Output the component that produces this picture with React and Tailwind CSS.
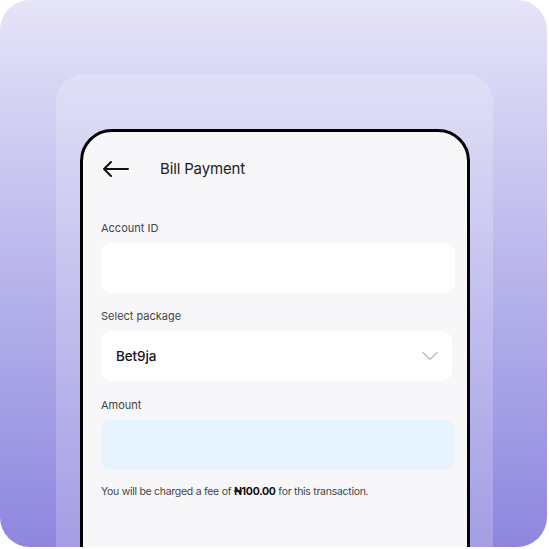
import React from "react";

export default function App() {
  const font = { fontFamily: "Inter, 'Liberation Sans', sans-serif" };
  return (
    <div className="w-[549px] h-[549px] bg-white" style={font}>
      <div className="w-[547px] h-[547px] rounded-[30px] overflow-hidden bg-gradient-to-b from-[#e6e4f7] to-[#8e86de] flex flex-col pt-[74px] pl-[56px]">
        <div className="w-[437px] flex-1 rounded-t-[28px] bg-white/20 pt-[55px] pl-[24px] overflow-hidden">
          <div className="w-[390px] h-[430px] border-[3px] border-black rounded-t-[32px] bg-[#f7f7f9] pl-[18px]">
            <div className="flex items-center h-[24px] mt-[25px]">
              <svg width="28" height="18" viewBox="0 0 28 18" className="ml-[1px]" fill="none" stroke="#111" strokeWidth="2" strokeLinecap="round" strokeLinejoin="round">
                <path d="M26 9H2M9 2L2 9L9 16" />
              </svg>
              <span className="ml-[30px] text-[15px] text-[#1c1c1e] tracking-[-0.15px]">Bill Payment</span>
            </div>
            <div className="mt-[39px] text-[11px] leading-[16px] text-[#444]">Account ID</div>
            <div className="mt-[7px] w-[354px] h-[50px] rounded-[10px] bg-white" />
            <div className="mt-[15px] text-[11px] leading-[16px] text-[#444]">Select package</div>
            <div className="mt-[7px] w-[351px] h-[50px] rounded-[10px] bg-white flex items-center justify-between pl-[15px] pr-[14px]">
              <span className="text-[13.5px] font-medium text-[#151515] tracking-[-0.1px]">Bet9ja</span>
              <svg width="16" height="10" viewBox="0 0 16 10" fill="none" stroke="#b8b8be" strokeWidth="1.3" strokeLinecap="round" strokeLinejoin="round">
                <path d="M1 1.5L8 8.5L15 1.5" />
              </svg>
            </div>
            <div className="mt-[16px] text-[11px] leading-[16px] text-[#444]">Amount</div>
            <div className="mt-[7px] w-[354px] h-[50px] rounded-[10px] bg-[#e8f4fd]" />
            <div className="mt-[14px] text-[10.5px] leading-[16px] text-[#444] tracking-[-0.28px]">
              You will be charged a fee of <span className="font-bold text-[#111]">₦100.00</span> for this transaction.
            </div>
          </div>
        </div>
      </div>
    </div>
  );
}
